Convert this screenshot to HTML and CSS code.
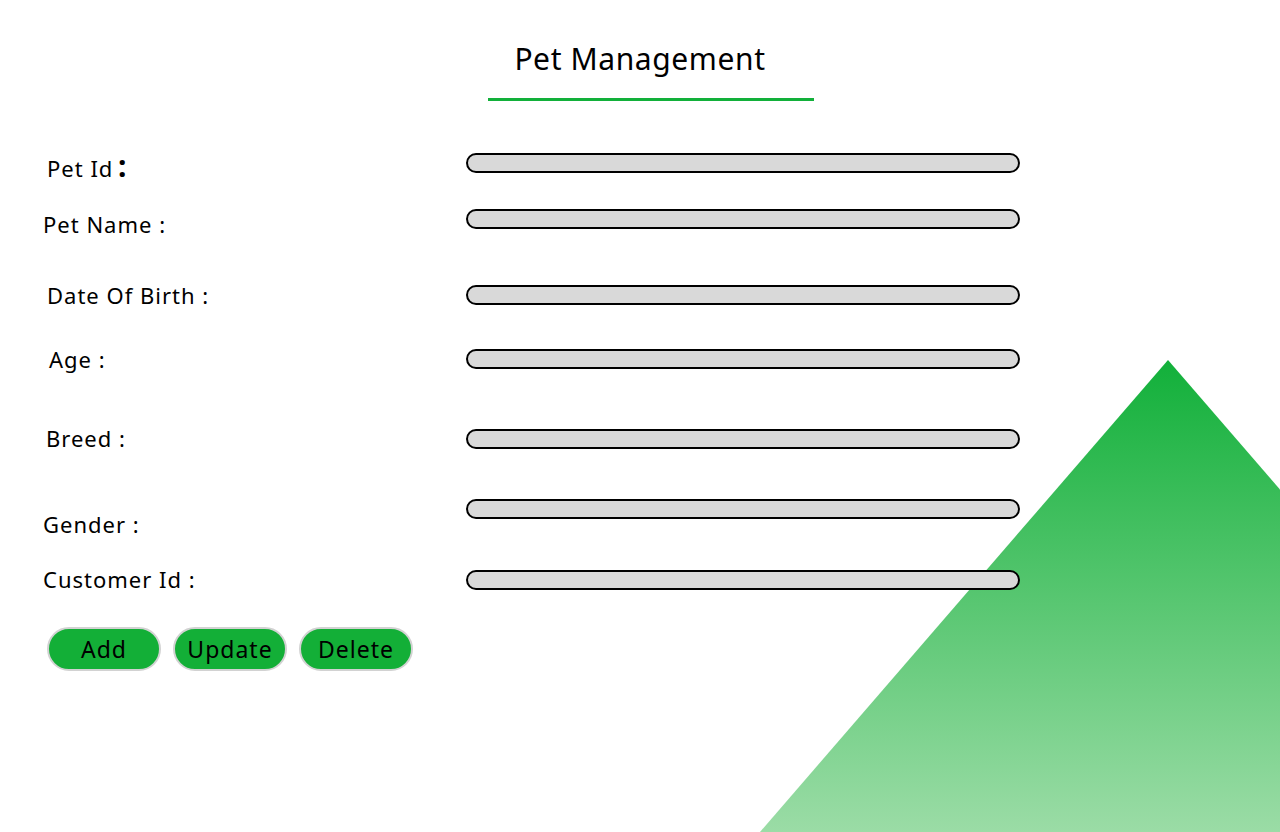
FILE: index.html
```html
<!DOCTYPE html>
<html lang="en">
<head>
<meta charset="utf-8">
<title>Pet Management</title>
<link rel="stylesheet" href="styles.css">
</head>
<body>
<div class="page">
  <div class="triangle"></div>
  <header class="header">
    <h1 class="title">Pet Management</h1>
    <div class="title-line"></div>
  </header>
  <form class="form">
    <div class="row row-1">
      <label class="label indent-4" for="petId">Pet Id <span class="colon-big">:</span></label>
      <input class="field" id="petId" type="text">
    </div>
    <div class="row row-2">
      <label class="label" for="petName">Pet Name :</label>
      <input class="field" id="petName" type="text">
    </div>
    <div class="row row-3">
      <label class="label indent-4" for="dob">Date Of Birth :</label>
      <input class="field" id="dob" type="text">
    </div>
    <div class="row row-4">
      <label class="label indent-6" for="age">Age :</label>
      <input class="field" id="age" type="text">
    </div>
    <div class="row row-5">
      <label class="label indent-3" for="breed">Breed :</label>
      <input class="field" id="breed" type="text">
    </div>
    <div class="row row-6">
      <label class="label" for="gender">Gender :</label>
      <input class="field" id="gender" type="text">
    </div>
    <div class="row row-7">
      <label class="label" for="customerId">Customer Id :</label>
      <input class="field" id="customerId" type="text">
    </div>
    <div class="actions">
      <button class="btn" type="button">Add</button>
      <button class="btn" type="button">Update</button>
      <button class="btn" type="button">Delete</button>
    </div>
  </form>
</div>
</body>
</html>
```
FILE: styles.css
```css
* {
  box-sizing: border-box;
}

html, body {
  margin: 0;
  padding: 0;
  background: #ffffff;
}

body {
  font-family: "Noto Sans", "Open Sans", sans-serif;
  color: #000000;
  overflow: hidden;
}

.page {
  position: relative;
  width: 1280px;
  height: 832px;
  overflow: hidden;
  isolation: isolate;
  background: #ffffff;
}

.triangle {
  position: absolute;
  left: 760px;
  top: 360px;
  width: 816px;
  height: 472px;
  z-index: -1;
  clip-path: polygon(50% 0, 100% 100%, 0 100%);
  background: linear-gradient(180deg, #12b03a 0%, #9bdca6 100%);
}

.header {
  padding-top: 41px;
}

.title {
  margin: 0;
  font-size: 30px;
  line-height: 36px;
  font-weight: 400;
  text-align: center;
  letter-spacing: 0.6px;
}

.title-line {
  margin: 21px 0 0 488px;
  width: 326px;
  height: 3px;
  background: #12b03a;
}

.form {
  margin-top: 52px;
  padding-left: 43px;
}

.row {
  display: flex;
  align-items: center;
  height: 20px;
}

.row-2 { margin-top: 36px; }
.row-3 { margin-top: 56px; }
.row-4 { margin-top: 44px; }
.row-5 { margin-top: 60px; }
.row-6 { margin-top: 50px; }
.row-7 { margin-top: 51px; }

.label {
  flex: 0 0 423px;
  font-size: 22px;
  line-height: 20px;
  letter-spacing: 1px;
  white-space: nowrap;
  padding-bottom: 3px;
}

.row-1 .label { margin-top: 10px; }
.row-2 .label { margin-top: 12px; }
.row-3 .label { margin-top: 3px; }
.row-4 .label { margin-top: 2px; }
.row-6 .label { margin-top: 33px; }

.indent-3 { padding-left: 3px; }
.indent-4 { padding-left: 4px; }
.indent-6 { padding-left: 6px; }

.colon-big {
  font-size: 30px;
  font-weight: 700;
  margin-left: -2px;
}

.field {
  flex: 0 0 554px;
  width: 554px;
  height: 20px;
  margin: 0;
  padding: 0 10px;
  border: 2px solid #000000;
  border-radius: 10px;
  background: #d9d9d9;
  font: inherit;
  outline: none;
}

.actions {
  display: flex;
  gap: 12px;
  margin-top: 37px;
  padding-left: 4px;
}

.btn {
  width: 114px;
  height: 44px;
  margin: 0;
  padding: 0;
  border: 2px solid #d2d2d2;
  border-radius: 22px;
  background: #13af37;
  color: #000000;
  font-family: "Noto Sans", "Open Sans", sans-serif;
  font-size: 23px;
  line-height: 26px;
  letter-spacing: 1px;
  cursor: pointer;
}
```
